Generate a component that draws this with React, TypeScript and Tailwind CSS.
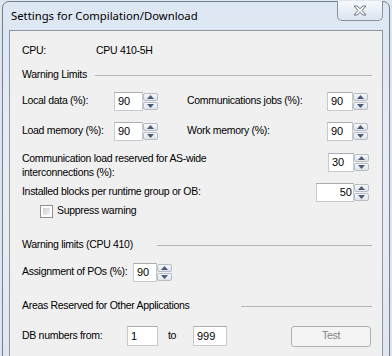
import React from 'react';

const ui = { fontFamily: '"Liberation Sans", Arial, sans-serif' };

function Arrow({ up }: { up?: boolean }) {
  return (
    <svg width="7" height="4" viewBox="0 0 7 4">
      <path d={up ? 'M0 4 L3.5 0 L7 4 Z' : 'M0 0 L3.5 4 L7 0 Z'} fill="#4a5a78" />
    </svg>
  );
}

function Spin({ value, w, right }: { value: string; w: number; right?: boolean }) {
  return (
    <div className="flex items-center h-[19px] shrink-0">
      <div
        className={`h-[19px] bg-white border border-[#c5c9d0] border-t-[#abadb3] flex items-center text-black text-[11px] tracking-normal ${right ? 'justify-end pr-[1px]' : 'pl-[3px]'}`}
        style={{ width: w }}
      >
        {value}
      </div>
      <div className="flex flex-col gap-[1px] h-[19px] py-[1px]">
        <div className="w-[15px] h-[8px] flex items-center justify-center border border-[#b8bcc4] rounded-[2px] bg-gradient-to-b from-[#f7f8fa] to-[#dfe3e8]">
          <Arrow up />
        </div>
        <div className="w-[15px] h-[8px] flex items-center justify-center border border-[#b8bcc4] rounded-[2px] bg-gradient-to-b from-[#f7f8fa] to-[#dfe3e8]">
          <Arrow />
        </div>
      </div>
    </div>
  );
}

function Group({ title, lineLeft }: { title: string; lineLeft: number }) {
  return (
    <div className="flex items-center h-[16px]">
      <span className="whitespace-nowrap shrink-0" style={{ width: lineLeft }}>{title}</span>
      <div className="flex-1 border-t border-[#b5b5b5] mr-[-3px]" />
    </div>
  );
}

export default function App() {
  return (
    <div className="w-[392px] h-[356px] overflow-hidden bg-[#dfe5ec] pt-[1px]" style={ui}>
      <div className="ml-[2px] w-[388px] h-[380px] border border-[#6f8091] rounded-t-[7px] bg-gradient-to-b from-[#dce7f3] via-[#e9eef4] to-[#dfe6ee] px-[6px] relative">
        {/* title bar */}
        <div className="h-[28px] flex items-center pl-[2px]">
          <span className="text-[11.3px] text-black" style={{ fontFamily: '"Noto Sans", "Open Sans", sans-serif' }}>
            Settings for Compilation/Download
          </span>
        </div>
        <div className="absolute right-[6px] top-[-1px] w-[46px] h-[20px] border border-[#8593a3] border-t-0 rounded-b-[5px] bg-gradient-to-b from-[#f6f9fc] to-[#dbe4ee] flex items-center justify-center">
          <svg width="14" height="11" viewBox="0 0 14 11">
            <path
              d="M1 1 L4 1 L7 3.6 L10 1 L13 1 L9 5.5 L13 10 L10 10 L7 7.4 L4 10 L1 10 L5 5.5 Z"
              fill="#ffffff"
              stroke="#6b7480"
              strokeWidth="1"
              strokeLinejoin="round"
            />
          </svg>
        </div>

        {/* client area */}
        <div className="border border-[#8d97a2] bg-[#f0f0f0] h-[340px] pl-[12px] pr-[13px] pt-[10px] text-[10.5px] tracking-[-0.3px] text-black whitespace-nowrap">
          <div className="flex items-center h-[20px]">
            <span className="w-[74px]">CPU:</span>
            <span>CPU 410-5H</span>
          </div>

          <div className="mt-[6px]">
            <Group title="Warning Limits" lineLeft={73} />
          </div>

          <div className="flex items-center h-[20px] mt-[8px]">
            <span className="w-[92px] shrink-0">Local data (%):</span>
            <Spin value="90" w={29} />
            <span className="ml-[29px] w-[140px] shrink-0">Communications jobs (%):</span>
            <Spin value="90" w={26} />
          </div>

          <div className="flex items-center h-[20px] mt-[10px]">
            <span className="w-[92px] shrink-0">Load memory (%):</span>
            <Spin value="90" w={29} />
            <span className="ml-[29px] w-[140px] shrink-0">Work memory (%):</span>
            <Spin value="90" w={26} />
          </div>

          <div className="flex items-start justify-between mt-[10px] h-[28px]">
            <div className="leading-[14px]">
              Communication load reserved for AS-wide
              <br />
              interconnections (%):
            </div>
            <div className="mt-[2px]">
              <Spin value="30" w={26} />
            </div>
          </div>

          <div className="flex items-center justify-between h-[20px] mt-[3px]">
            <span>Installed blocks per runtime group or OB:</span>
            <Spin value="50" w={38} right />
          </div>

          <div className="flex items-center h-[14px] mt-[2px] pl-[18px]">
            <div className="w-[13px] h-[13px] border border-[#8e8f8f] bg-white p-[2px]">
              <div className="w-full h-full bg-gradient-to-br from-[#cbcfd5] to-[#f4f4f4]" />
            </div>
            <span className="ml-[4px]">Suppress warning</span>
          </div>

          <div className="mt-[19px]">
            <Group title="Warning limits (CPU 410)" lineLeft={135} />
          </div>

          <div className="flex items-center h-[20px] mt-[9px]">
            <span className="w-[111px] shrink-0">Assignment of POs (%):</span>
            <Spin value="90" w={24} />
          </div>

          <div className="mt-[16px]">
            <Group title="Areas Reserved for Other Applications" lineLeft={219} />
          </div>

          <div className="flex items-center h-[20px] mt-[12px]">
            <span className="w-[105px] shrink-0">DB numbers from:</span>
            <div className="w-[31px] h-[20px] bg-white border border-[#c5c9d0] border-t-[#abadb3] flex items-center pl-[3px] text-[11px] tracking-normal">1</div>
            <span className="ml-[10px] w-[25px]">to</span>
            <div className="w-[34px] h-[20px] bg-white border border-[#c5c9d0] border-t-[#abadb3] flex items-center pl-[3px] text-[11px] tracking-normal">999</div>
            <div className="ml-auto mr-[-2px] w-[80px] h-[21px] border border-[#adb2b5] rounded-[3px] bg-[#f4f4f4] flex items-center justify-center text-[#838383]">
              Test
            </div>
          </div>
        </div>
      </div>
    </div>
  );
}
